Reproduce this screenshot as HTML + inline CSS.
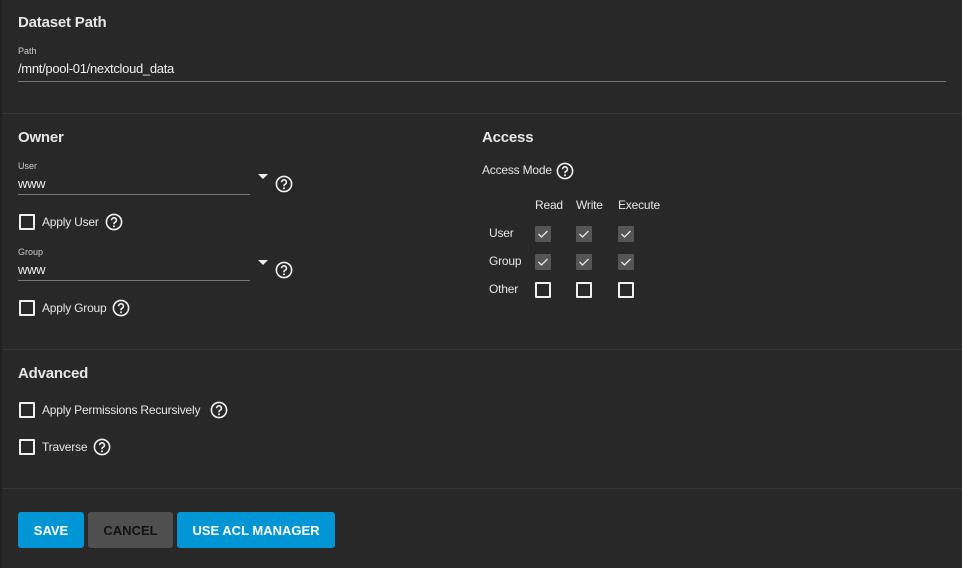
<!DOCTYPE html>
<html><head><style>
body{margin:0;width:962px;height:568px;background:#282828;font-family:"Liberation Sans",Arial,sans-serif;color:#e8e8e8;position:relative;overflow:hidden}
.a{position:absolute;white-space:nowrap}
.h{font-size:15px;font-weight:bold;color:#e6e6e6;letter-spacing:-0.2px}
.lbl{font-size:9px;color:#ccc}
.val{font-size:13px;color:#eee;letter-spacing:-0.3px}
.ul{position:absolute;height:1px;background:#777}
.div{position:absolute;left:2px;right:0;height:1px;background:#353535}
.cb{position:absolute;width:12px;height:12px;border:2px solid #f0f0f0;border-radius:1px}
.ck{position:absolute;width:16px;height:16px;background:#555;border-radius:1px}
.t{font-size:12px;color:#e6e6e6;letter-spacing:-0.2px}
.btn{position:absolute;top:512px;height:36px;border-radius:3px;font-size:13px;font-weight:bold;display:flex;align-items:center;justify-content:center}
.arrow{position:absolute;width:0;height:0;border-left:5px solid transparent;border-right:5px solid transparent;border-top:5px solid #eee}
</style></head><body>
<div class="a" style="left:0;top:0;width:2px;height:568px;background:#202020"></div>
<svg width="0" height="0" style="position:absolute"><defs><symbol id="q" viewBox="0 0 18 18"><circle cx="9" cy="9" r="7.6" fill="none" stroke="#eee" stroke-width="1.6"/><path d="M6.6 7.2a2.4 2.4 0 1 1 3.3 2.2c-.6.3-.9.7-.9 1.4v.5" fill="none" stroke="#eee" stroke-width="1.6"/><circle cx="9" cy="13.2" r="1" fill="#eee"/></symbol><symbol id="c" viewBox="0 0 16 16"><path d="M3.5 8l3 3 6-6" fill="none" stroke="#e8e8e8" stroke-width="1.3"/></symbol></defs></svg>

<div class="a h" style="left:18px;top:14px">Dataset Path</div>
<div class="a lbl" style="left:18px;top:46px">Path</div>
<div class="a val" style="left:18px;top:61px">/mnt/pool-01/nextcloud_data</div>
<div class="ul" style="left:18px;top:81px;width:928px"></div>
<div class="div" style="top:113px"></div>

<div class="a h" style="left:18px;top:129px">Owner</div>
<div class="a lbl" style="left:18px;top:161px">User</div>
<div class="a val" style="left:18px;top:176px">www</div>
<div class="ul" style="left:18px;top:194px;width:232px"></div>
<div class="arrow" style="left:258px;top:174px"></div>
<svg class="a" style="left:275px;top:175px" width="18" height="18"><use href="#q"/></svg>
<div class="cb" style="left:19px;top:214px"></div>
<div class="a t" style="left:42px;top:215px">Apply User</div>
<svg class="a" style="left:105px;top:213px" width="18" height="18"><use href="#q"/></svg>

<div class="a lbl" style="left:18px;top:247px">Group</div>
<div class="a val" style="left:18px;top:262px">www</div>
<div class="ul" style="left:18px;top:280px;width:232px"></div>
<div class="arrow" style="left:258px;top:260px"></div>
<svg class="a" style="left:275px;top:261px" width="18" height="18"><use href="#q"/></svg>
<div class="cb" style="left:19px;top:300px"></div>
<div class="a t" style="left:42px;top:301px">Apply Group</div>
<svg class="a" style="left:112px;top:299px" width="18" height="18"><use href="#q"/></svg>

<div class="a h" style="left:482px;top:129px">Access</div>
<div class="a t" style="left:482px;top:163px">Access Mode</div>
<svg class="a" style="left:556px;top:162px" width="18" height="18"><use href="#q"/></svg>
<div class="a t" style="left:535px;top:198px">Read</div>
<div class="a t" style="left:576px;top:198px">Write</div>
<div class="a t" style="left:618px;top:198px">Execute</div>
<div class="a t" style="left:489px;top:226px">User</div>
<div class="a t" style="left:489px;top:254px">Group</div>
<div class="a t" style="left:489px;top:282px">Other</div>
<div class="ck" style="left:535px;top:226px"><svg width="16" height="16"><use href="#c"/></svg></div>
<div class="ck" style="left:576px;top:226px"><svg width="16" height="16"><use href="#c"/></svg></div>
<div class="ck" style="left:618px;top:226px"><svg width="16" height="16"><use href="#c"/></svg></div>
<div class="ck" style="left:535px;top:254px"><svg width="16" height="16"><use href="#c"/></svg></div>
<div class="ck" style="left:576px;top:254px"><svg width="16" height="16"><use href="#c"/></svg></div>
<div class="ck" style="left:618px;top:254px"><svg width="16" height="16"><use href="#c"/></svg></div>
<div class="cb" style="left:535px;top:282px"></div>
<div class="cb" style="left:576px;top:282px"></div>
<div class="cb" style="left:618px;top:282px"></div>

<div class="div" style="top:349px"></div>
<div class="a h" style="left:18px;top:365px">Advanced</div>
<div class="cb" style="left:19px;top:402px"></div>
<div class="a t" style="left:42px;top:403px">Apply Permissions Recursively</div>
<svg class="a" style="left:210px;top:401px" width="18" height="18"><use href="#q"/></svg>
<div class="cb" style="left:19px;top:439px"></div>
<div class="a t" style="left:42px;top:440px">Traverse</div>
<svg class="a" style="left:93px;top:438px" width="18" height="18"><use href="#q"/></svg>

<div class="div" style="top:488px"></div>
<div class="btn" style="left:18px;width:66px;background:#0095d5;color:#fff">SAVE</div>
<div class="btn" style="left:88px;width:85px;background:#4f4f4f;color:#111">CANCEL</div>
<div class="btn" style="left:177px;width:158px;background:#0095d5;color:#fff">USE ACL MANAGER</div>
</body></html>
